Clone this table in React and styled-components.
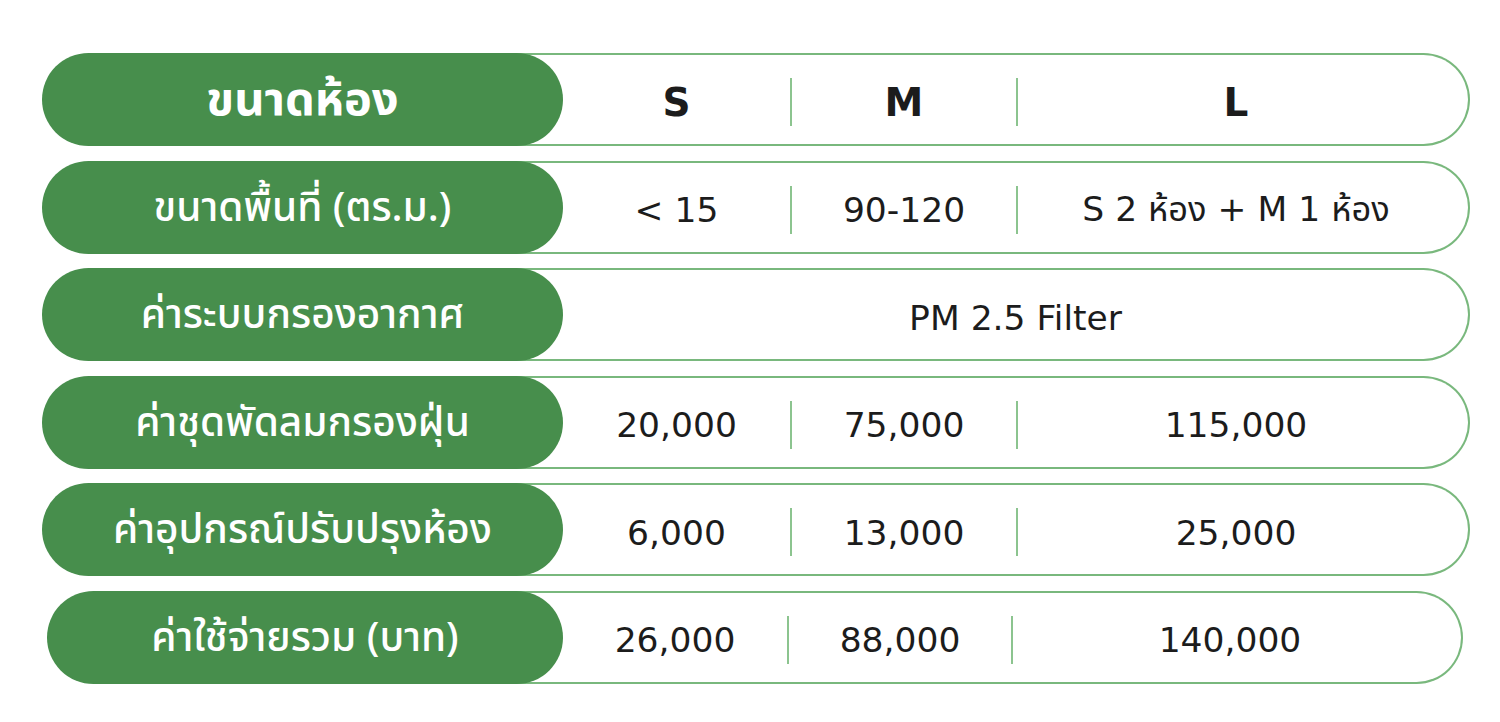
import React from "react";
import styled, { createGlobalStyle } from "styled-components";

const GlobalStyle = createGlobalStyle`
  html, body {
    margin: 0;
    padding: 0;
    background: #ffffff;
  }
  body {
    font-family: "Noto Sans", "Noto Sans Thai", sans-serif;
  }
`;

const green = "#478e4c";
const line = "#79b87d";

const Page = styled.div`
  width: 1500px;
  height: 722px;
  box-sizing: border-box;
  padding: 53px 30px 0 42px;
  display: flex;
  flex-direction: column;
  gap: 14.5px;
`;

const Row = styled.div`
  display: flex;
  align-items: stretch;
  height: 93px;
  margin: ${(p) => (p.$shift ? "0 7px 0 5px" : "0")};
`;

const Label = styled.div`
  position: relative;
  z-index: 1;
  flex: 0 0 ${(p) => (p.$shift ? "516px" : "521px")};
  border-radius: 47px;
  background: ${green};
  color: #ffffff;
  display: flex;
  align-items: center;
  justify-content: center;
  padding-top: 2px;
  box-sizing: border-box;
  font-size: ${(p) => (p.$head ? "47px" : "40.5px")};
  font-weight: ${(p) => (p.$head ? 700 : 500)};
`;

const Cells = styled.div`
  flex: 1;
  display: flex;
  align-items: center;
  margin-left: -48px;
  padding-left: 48px;
  border: 2px solid ${line};
  border-left: none;
  border-radius: 0 47px 47px 0;
`;

const Cell = styled.div`
  flex: ${(p) => (p.$wide ? "1" : `0 0 ${p.$w || 226}px`)};
  text-align: center;
  padding-right: ${(p) => (p.$pad ? "14px" : "0")};
  padding-top: 6px;
  color: #1c1c1c;
  font-family: "DejaVu Sans", "Noto Sans Thai", sans-serif;
  font-size: ${(p) => (p.$head ? "39px" : "34.5px")};
  font-weight: ${(p) => (p.$head ? 700 : 400)};
`;

const Divider = styled.div`
  flex: 0 0 2px;
  height: 48px;
  margin-top: 5px;
  background: #8cc48f;
`;

const rows = [
  { label: "ขนาดพื้นที่ (ตร.ม.)", values: ["< 15", "90-120", "S 2 ห้อง + M 1 ห้อง"] },
  { label: "ค่าระบบกรองอากาศ", values: ["PM 2.5 Filter"] },
  { label: "ค่าชุดพัดลมกรองฝุ่น", values: ["20,000", "75,000", "115,000"] },
  { label: "ค่าอุปกรณ์ปรับปรุงห้อง", values: ["6,000", "13,000", "25,000"] },
  { label: "ค่าใช้จ่ายรวม (บาท)", values: ["26,000", "88,000", "140,000"], shift: true },
];

function Values({ values, head, shift }) {
  if (values.length === 1) {
    return (
      <Cells>
        <Cell $wide>{values[0]}</Cell>
      </Cells>
    );
  }
  return (
    <Cells>
      <Cell $head={head} $w={shift ? 224 : 227}>
        {values[0]}
      </Cell>
      <Divider />
      <Cell $head={head} $w={shift ? 222 : 224}>
        {values[1]}
      </Cell>
      <Divider />
      <Cell $head={head} $wide $pad>
        {values[2]}
      </Cell>
    </Cells>
  );
}

export default function App() {
  return (
    <>
      <GlobalStyle />
      <Page>
        <Row>
          <Label $head>ขนาดห้อง</Label>
          <Values head values={["S", "M", "L"]} />
        </Row>
        {rows.map((r) => (
          <Row key={r.label} $shift={r.shift}>
            <Label $shift={r.shift}>{r.label}</Label>
            <Values values={r.values} shift={r.shift} />
          </Row>
        ))}
      </Page>
    </>
  );
}
